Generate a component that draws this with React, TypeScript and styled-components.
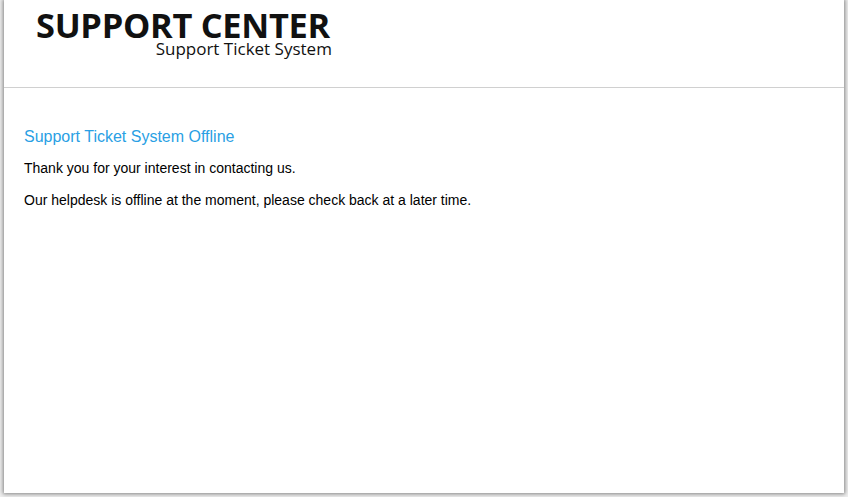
import React from "react";
import styled, { createGlobalStyle } from "styled-components";

const Global = createGlobalStyle`
  html, body { margin: 0; padding: 0; }
  body {
    background: #eeeeee;
    font-family: "Liberation Sans", Arial, sans-serif;
    overflow: hidden;
  }
`;

const Page = styled.div`
  width: 848px;
  height: 497px;
  overflow: hidden;
  display: flex;
  justify-content: center;
  align-items: flex-start;
`;

const Container = styled.div`
  width: 840px;
  height: 493px;
  background: #ffffff;
  box-shadow: 0 0 4px 1px rgba(0, 0, 0, 0.45);
  display: flex;
  flex-direction: column;
`;

const Header = styled.header`
  height: 88px;
  box-sizing: border-box;
  border-bottom: 1px solid #d0d0d0;
  padding: 9px 0 0 32px;
`;

const Logo = styled.div`
  display: inline-flex;
  flex-direction: column;
  align-items: flex-end;
  font-family: "Open Sans", "Noto Sans", sans-serif;
  color: #111;
`;

const LogoTitle = styled.div`
  font-size: 34.4px;
  font-weight: 700;
  line-height: 32px;
  letter-spacing: -0.3px;
`;

const LogoSub = styled.div`
  font-size: 17px;
  line-height: 14px;
  margin-top: 1px;
  margin-right: -2px;
`;

const Content = styled.main`
  padding: 39px 20px 0 20px;
`;

const Title = styled.h1`
  margin: 0 0 13px;
  font-size: 16px;
  font-weight: 400;
  line-height: 20px;
  color: #2a9fe4;
`;

const Para = styled.p`
  margin: 0 0 16px;
  font-size: 14px;
  line-height: 16px;
  color: #000;
`;

export default function App() {
  return (
    <>
      <Global />
      <Page>
        <Container>
          <Header>
            <Logo>
              <LogoTitle>SUPPORT CENTER</LogoTitle>
              <LogoSub>Support Ticket System</LogoSub>
            </Logo>
          </Header>
          <Content>
            <Title>Support Ticket System Offline</Title>
            <Para>Thank you for your interest in contacting us.</Para>
            <Para>Our helpdesk is offline at the moment, please check back at a later time.</Para>
          </Content>
        </Container>
      </Page>
    </>
  );
}
